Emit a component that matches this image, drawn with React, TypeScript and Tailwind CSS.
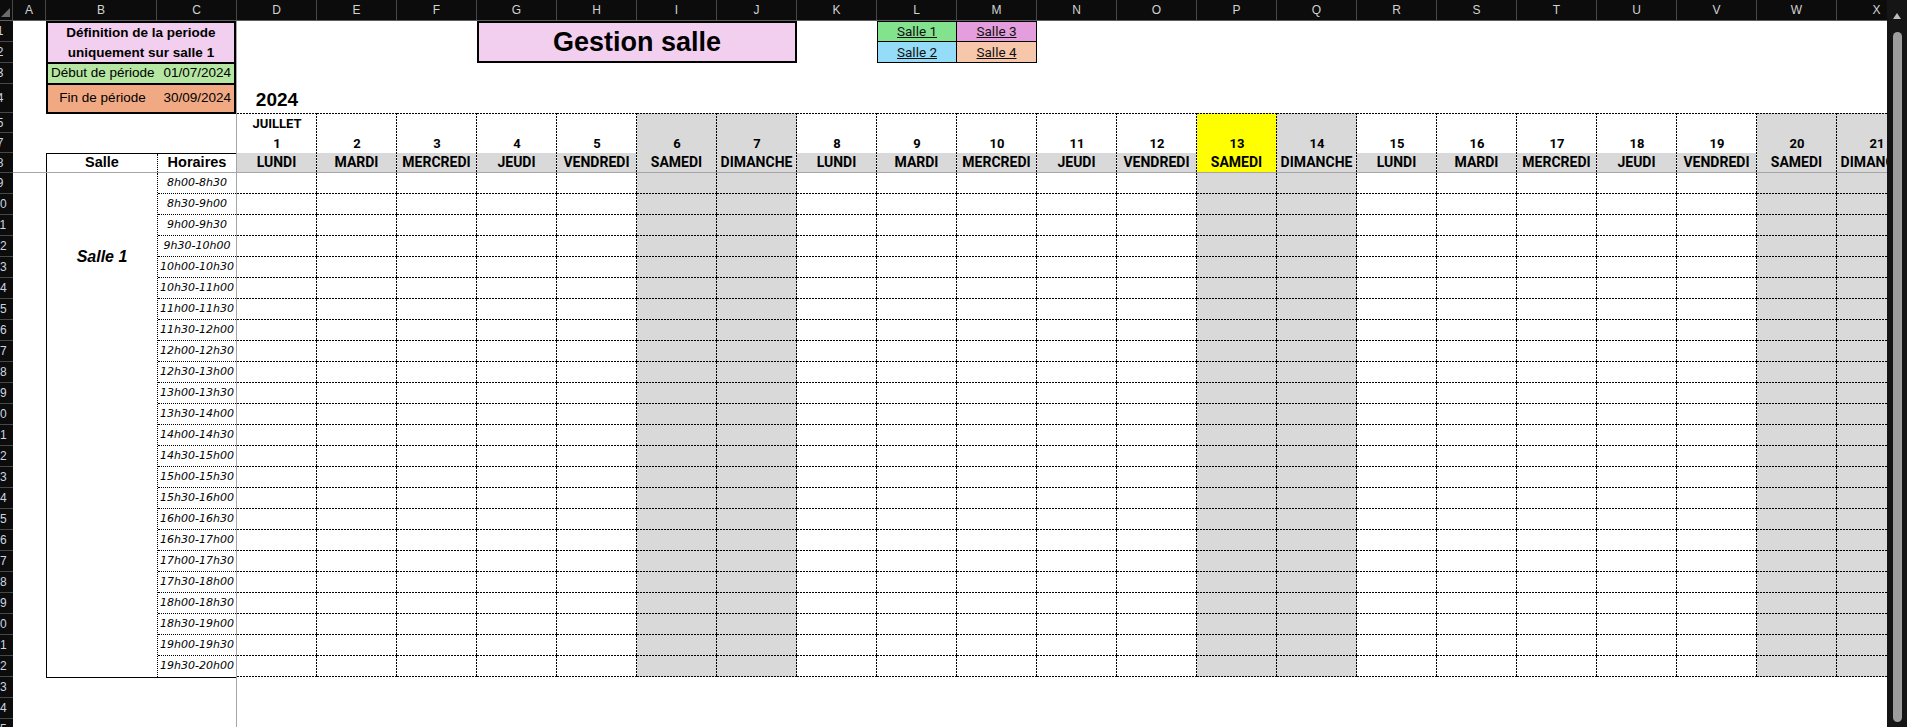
import React from "react";

const DAY_NAMES = ["LUNDI", "MARDI", "MERCREDI", "JEUDI", "VENDREDI", "SAMEDI", "DIMANCHE"];
const DAY_COLS = ["D", "E", "F", "G", "H", "I", "J", "K", "L", "M", "N", "O", "P", "Q", "R", "S", "T", "U", "V", "W", "X"];

const days = DAY_COLS.map((_, i) => ({
  num: i + 1,
  name: DAY_NAMES[i % 7],
  weekend: i % 7 >= 5,
  today: i + 1 === 13,
}));

const times: string[] = [];
for (let h = 8; h < 20; h++) {
  times.push(`${h}h00-${h}h30`);
  times.push(`${h}h30-${h + 1}h00`);
}

// row numbers shown in the left gutter (row 6 is hidden in the sheet)
const rowHeads: { n: number; h: string }[] = [
  { n: 1, h: "h-[21px]" },
  { n: 2, h: "h-[21px]" },
  { n: 3, h: "h-[21px]" },
  { n: 4, h: "h-[29px]" },
  { n: 5, h: "h-[20px]" },
  { n: 7, h: "h-[20px]" },
  { n: 8, h: "h-[20px]" },
  ...Array.from({ length: 27 }, (_, i) => ({ n: i + 9, h: "h-[21px]" })),
];

const dashTopRight =
  "bg-[image:repeating-linear-gradient(90deg,#000_0_2px,transparent_2px_3px),repeating-linear-gradient(180deg,#000_0_2px,transparent_2px_3px)] bg-[length:100%_1px,1px_100%] bg-[position:0_0,100%_0] bg-no-repeat";
const dashBottomRight =
  "bg-[image:repeating-linear-gradient(90deg,#000_0_2px,transparent_2px_3px),repeating-linear-gradient(180deg,#000_0_2px,transparent_2px_3px)] bg-[length:100%_1px,1px_100%] bg-[position:0_100%,100%_0] bg-no-repeat";

const narrow = "font-['Roboto',sans-serif]";

function HeaderBar() {
  return (
    <div className="h-[21px] shrink-0 flex bg-[#0c0c0c] border-b border-[#5e5e5e] text-[#d2d2d2] text-[12px]">
      <div className="w-[13px] shrink-0 border-r border-[#474747]">
        <svg width="13" height="20" viewBox="0 0 13 20">
          <polygon points="1,17 10,17 10,8" fill="#6b6b6b" />
        </svg>
      </div>
      <div className="w-[33px] shrink-0 border-r border-[#474747] flex items-center justify-center">A</div>
      <div className="w-[111px] shrink-0 border-r border-[#474747] flex items-center justify-center">B</div>
      <div className="w-[80px] shrink-0 border-r border-[#474747] flex items-center justify-center">C</div>
      {DAY_COLS.map((c) => (
        <div key={c} className="w-[80px] shrink-0 border-r border-[#474747] flex items-center justify-center">
          {c}
        </div>
      ))}
    </div>
  );
}

function RowHeaders() {
  return (
    <div className="w-[13px] shrink-0 bg-[#0c0c0c] overflow-hidden flex flex-col text-[12px] text-[#cdd6e0]">
      {rowHeads.map((r) => (
        <div key={r.n} className={`${r.h} shrink-0 border-b border-[#474747] flex items-center`}>
          <div className="w-[26px] -ml-[13px] shrink-0 text-center">{r.n}</div>
        </div>
      ))}
    </div>
  );
}

function TopLeft() {
  return (
    <div className="w-[224px] shrink-0 border-r border-[#a6a6a6] flex">
      <div className="w-[33px] shrink-0" />
      <div className="flex-1 flex flex-col">
        <div className="h-[93px] shrink-0 border-2 border-black flex flex-col text-[13.5px]">
          <div className="h-[41px] bg-[#f2ceef] border-b-2 border-black flex flex-col items-center justify-center font-bold leading-[20px]">
            <span>Définition de la periode</span>
            <span>uniquement sur salle 1</span>
          </div>
          <div className="h-[21px] bg-[#b5e6a2] border-b-2 border-black flex items-center justify-between pl-[3px] pr-[3px]">
            <span>Début de période</span>
            <span>01/07/2024</span>
          </div>
          <div className="h-[27px] bg-[#f1a983] flex items-center">
            <span className="w-[109px] text-center">Fin de période</span>
            <span className="flex-1 text-right pr-[3px]">30/09/2024</span>
          </div>
        </div>
        <div className="h-[39px] shrink-0" />
        <div className="h-[19px] shrink-0 border-t border-l border-black flex text-[14.5px] font-bold">
          <div className="w-[110px] flex items-center justify-center">Salle</div>
          <div className="flex-1 border-l border-dotted border-black flex items-center justify-center">Horaires</div>
        </div>
      </div>
    </div>
  );
}

function TopRight() {
  return (
    <div className="flex-1 min-w-0 flex flex-col overflow-hidden">
      <div className="h-[92px] shrink-0 flex">
        <div className="w-[240px] shrink-0 flex flex-col justify-end">
          <div className="w-[80px] h-[29px] flex items-end justify-center pb-[4px] text-[19px] font-bold leading-none">
            2024
          </div>
        </div>
        <div className="w-[320px] shrink-0">
          <div className="h-[42px] border-2 border-black bg-[#f2ceef] flex items-center justify-center text-[27px] font-bold leading-none">
            Gestion salle
          </div>
        </div>
        <div className="w-[80px] shrink-0" />
        <div className="w-[160px] shrink-0">
          <div className={`h-[42px] border border-black grid grid-cols-2 grid-rows-2 text-[13.5px] text-[#111] ${narrow}`}>
            <div className="bg-[#83e28e] border-r border-b border-black flex items-center justify-center underline">Salle 1</div>
            <div className="bg-[#e59edd] border-b border-black flex items-center justify-center underline">Salle 3</div>
            <div className="bg-[#94dcf8] border-r border-black flex items-center justify-center underline">Salle 2</div>
            <div className="bg-[#f7c7ac] flex items-center justify-center underline">Salle 4</div>
          </div>
        </div>
      </div>
      <div className={`flex-1 flex ${narrow} font-bold`}>
        {days.map((d) => (
          <div
            key={d.num}
            className={`w-[80px] shrink-0 flex flex-col ${dashTopRight} ${
              d.today ? "bg-[#ffff00]" : d.weekend ? "bg-[#d9d9d9]" : ""
            }`}
          >
            <div className="h-[20px] pt-[2px] flex items-center justify-center text-[13px]">
              {d.num === 1 ? "JUILLET" : ""}
            </div>
            <div className="h-[20px] pt-[2px] flex items-center justify-center text-[13px]">{d.num}</div>
            <div
              className={`h-[19px] mr-px flex items-center justify-center text-[14px] ${
                d.today || d.weekend ? "" : "bg-[#d9d9d9]"
              }`}
            >
              {d.name}
            </div>
          </div>
        ))}
      </div>
    </div>
  );
}

function BottomLeft() {
  return (
    <div className="w-[224px] shrink-0 border-r border-[#a6a6a6] flex">
      <div className="w-[33px] shrink-0" />
      <div className="flex-1 flex flex-col">
        <div className="border-l border-b border-black flex">
          <div className="w-[110px] flex flex-col">
            <div className="h-[168px] flex items-center justify-center italic font-bold text-[16px]">Salle 1</div>
          </div>
          <div className="flex-1 border-l border-dotted border-black flex flex-col font-['DejaVu_Sans',sans-serif] italic text-[11px]">
            {times.map((t, i) => (
              <div
                key={t}
                className={`h-[21px] flex items-center justify-center ${
                  i < times.length - 1 ? "border-b border-dotted border-black" : ""
                }`}
              >
                {t}
              </div>
            ))}
          </div>
        </div>
      </div>
    </div>
  );
}

function BottomRight() {
  return (
    <div className="flex-1 min-w-0 flex overflow-hidden">
      {days.map((d) => (
        <div key={d.num} className="w-[80px] shrink-0 flex flex-col">
          {times.map((t) => (
            <div key={t} className={`h-[21px] ${dashBottomRight} ${d.weekend ? "bg-[#d9d9d9]" : ""}`} />
          ))}
        </div>
      ))}
    </div>
  );
}

function Scrollbar() {
  return (
    <div className="w-[20px] shrink-0 h-full bg-[#151515] flex flex-col items-center">
      <svg width="8" height="6" viewBox="0 0 8 6" className="mt-[13px]">
        <polygon points="4,0 8,6 0,6" fill="#bdbdbd" />
      </svg>
      <div className="mt-[13px] mb-[5px] w-[9px] flex-1 rounded-full bg-[#9d9d9d]" />
    </div>
  );
}

export default function App() {
  return (
    <div className="w-[1907px] h-[727px] overflow-hidden bg-white flex font-['Liberation_Sans',Arial,sans-serif] text-black">
      <div className="flex-1 min-w-0 overflow-hidden flex flex-col">
        <HeaderBar />
        <div className="flex flex-1 min-h-0">
          <RowHeaders />
          <div className="flex-1 min-w-0 flex flex-col">
            <div className="h-[152px] shrink-0 flex border-b border-[#a6a6a6]">
              <TopLeft />
              <TopRight />
            </div>
            <div className="flex-1 min-h-0 flex">
              <BottomLeft />
              <BottomRight />
            </div>
          </div>
        </div>
      </div>
      <Scrollbar />
    </div>
  );
}
